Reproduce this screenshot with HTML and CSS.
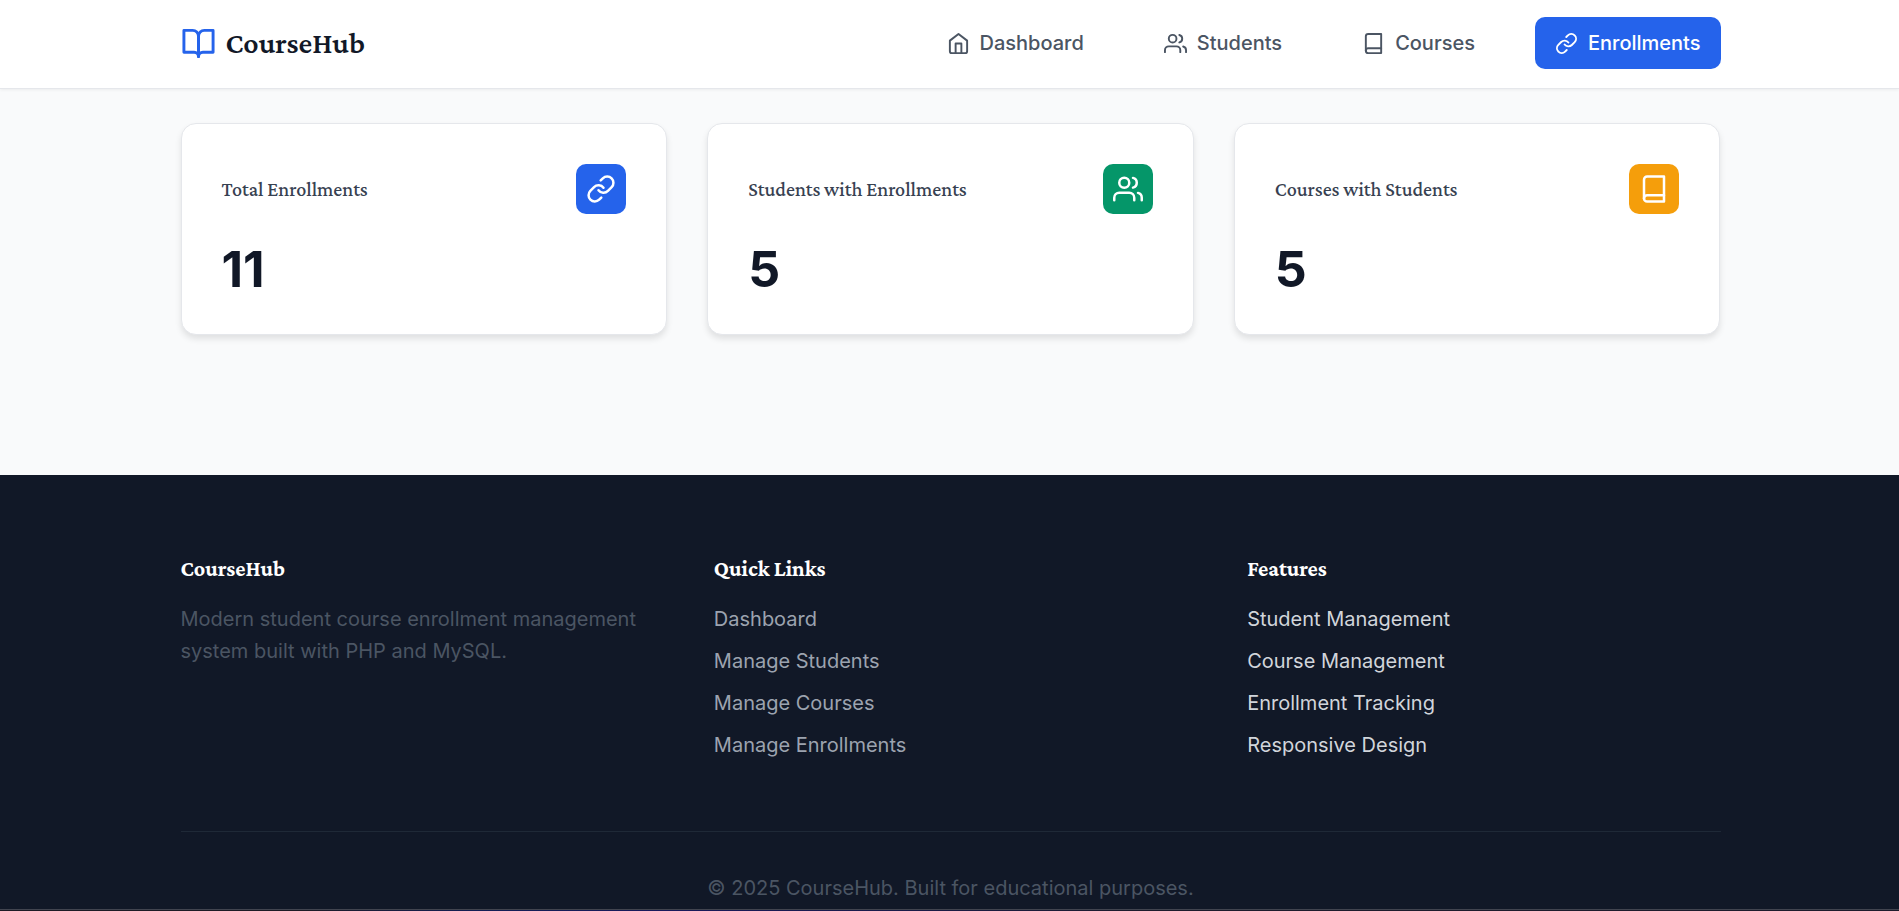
FILE: index.html
```html
<!DOCTYPE html>
<html lang="en">
<head>
<meta charset="utf-8">
<title>Enrollments - CourseHub</title>
<link rel="stylesheet" href="styles.css">
</head>
<body>
<svg class="sprite" aria-hidden="true">
  <symbol id="home" viewBox="0 0 24 24"><path d="M3 9l9-7 9 7v11a2 2 0 0 1-2 2H5a2 2 0 0 1-2-2z"/><path d="M9 22V12h6v10"/></symbol>
  <symbol id="users" viewBox="0 0 24 24"><path d="M17 21v-2a4 4 0 0 0-4-4H5a4 4 0 0 0-4 4v2"/><circle cx="9" cy="7" r="4"/><path d="M23 21v-2a4 4 0 0 0-3-3.87M16 3.13a4 4 0 0 1 0 7.75"/></symbol>
  <symbol id="book" viewBox="0 0 24 24"><path d="M4 19.5A2.5 2.5 0 0 1 6.5 17H20"/><path d="M6.5 2H20v20H6.5A2.5 2.5 0 0 1 4 19.5v-15A2.5 2.5 0 0 1 6.5 2z"/></symbol>
  <symbol id="link" viewBox="0 0 24 24"><path d="M10 13a5 5 0 0 0 7.54.54l3-3a5 5 0 0 0-7.07-7.07l-1.72 1.71"/><path d="M14 11a5 5 0 0 0-7.54-.54l-3 3a5 5 0 0 0 7.07 7.07l1.71-1.71"/></symbol>
  <symbol id="open-book" viewBox="0 0 24 24"><path d="M2 3h6a4 4 0 0 1 4 4v14a3 3 0 0 0-3-3H2z"/><path d="M22 3h-6a4 4 0 0 0-4 4v14a3 3 0 0 1 3-3h7z"/></symbol>
</svg>
<header class="header">
  <div class="container header-inner">
    <a class="brand" href="#"><svg class="icon brand-icon"><use href="#open-book"/></svg>CourseHub</a>
    <nav class="nav">
      <a class="nav-link" href="#"><svg class="icon"><use href="#home"/></svg>Dashboard</a>
      <a class="nav-link" href="#"><svg class="icon"><use href="#users"/></svg>Students</a>
      <a class="nav-link" href="#"><svg class="icon"><use href="#book"/></svg>Courses</a>
      <a class="nav-link active" href="#" aria-current="page"><svg class="icon"><use href="#link"/></svg>Enrollments</a>
    </nav>
  </div>
</header>
<main class="container stats">
  <section class="card">
    <div class="card-head"><h2 class="card-title">Total Enrollments</h2><span class="badge blue"><svg class="icon badge-icon"><use href="#link"/></svg></span></div>
    <p class="value">11</p>
  </section>
  <section class="card">
    <div class="card-head"><h2 class="card-title">Students with Enrollments</h2><span class="badge green"><svg class="icon badge-icon"><use href="#users"/></svg></span></div>
    <p class="value">5</p>
  </section>
  <section class="card">
    <div class="card-head"><h2 class="card-title">Courses with Students</h2><span class="badge amber"><svg class="icon badge-icon"><use href="#book"/></svg></span></div>
    <p class="value">5</p>
  </section>
</main>
<footer class="footer">
  <div class="container">
    <div class="footer-grid">
      <section><h3 class="footer-title">CourseHub</h3><p class="muted">Modern student course enrollment management system built with PHP and MySQL.</p></section>
      <section><h3 class="footer-title">Quick Links</h3>
        <ul class="list"><li><a href="#">Dashboard</a></li><li><a href="#">Manage Students</a></li><li><a href="#">Manage Courses</a></li><li><a href="#">Manage Enrollments</a></li></ul></section>
      <section><h3 class="footer-title">Features</h3>
        <ul class="list"><li>Student Management</li><li>Course Management</li><li>Enrollment Tracking</li><li>Responsive Design</li></ul></section>
    </div>
    <p class="copyright muted">© 2025 CourseHub. Built for educational purposes.</p>
  </div>
</footer>
<div class="edge"></div>
</body>
</html>
```
FILE: styles.css
```css
* { box-sizing: border-box; margin: 0; padding: 0; }
html { overflow: hidden; }
body { background: #f9fafb; color: #111827; font: 20px/32px Inter, sans-serif; }
a { color: inherit; text-decoration: none; }
.sprite { display: none; }
.icon { width: 23px; height: 23px; flex: none; fill: none; stroke: currentColor; stroke-width: 2; stroke-linecap: round; stroke-linejoin: round; }
.container { max-width: 1620px; margin: 0 auto; padding: 0 39px 0 41px; }
.header { background: #fff; border-bottom: 1px solid #e5e7eb; box-shadow: 0 1px 3px rgba(0, 0, 0, .06); }
.header-inner { display: flex; justify-content: space-between; align-items: center; padding-top: 17px; padding-bottom: 19px; }
.brand { display: flex; align-items: center; gap: 10px; font: 600 30px/40px "Crimson Pro", "Liberation Serif", serif; }
.brand-icon { width: 35px; height: 35px; color: #2563eb; }
.nav { display: flex; gap: 40px; }
.nav-link { display: flex; align-items: center; gap: 10px; padding: 10px 20px; border-radius: 10px; color: #4b5563; font-weight: 500; }
.nav-link.active { background: #2563eb; color: #fff; }
.stats { display: grid; grid-template-columns: repeat(3, 1fr); gap: 40px; padding-top: 34px; padding-bottom: 140px; }
.card { background: #fff; border: 1px solid #e5e7eb; border-radius: 15px; padding: 40px; box-shadow: 0 4px 6px rgba(0, 0, 0, .1); }
.card-head { display: flex; align-items: center; justify-content: space-between; margin-bottom: 30px; }
.card-title { font: 500 20px/26px "Crimson Pro", "Liberation Serif", serif; color: #374151; }
.badge { display: grid; place-items: center; width: 50px; height: 50px; border-radius: 10px; color: #fff; }
.badge-icon { width: 30px; height: 30px; }
.blue { background: #2563eb; }
.green { background: #059669; }
.amber { background: #f59e0b; }
.value { font-size: 50px; line-height: 50px; font-weight: 700; }
.footer { background: #111827; color: #d1d5db; padding: 80px 0 5px; }
.footer-grid { display: grid; grid-template-columns: repeat(3, 1fr); gap: 60px; margin-bottom: 70px; }
.footer-title { color: #fff; font: 700 22px/28px "Crimson Pro", "Liberation Serif", serif; margin-bottom: 20px; }
.list { list-style: none; display: grid; gap: 10px; }
.list a { color: #9ca3af; }
.muted { color: #4b5563; }
.copyright { border-top: 1px solid #1f2937; padding-top: 40px; text-align: center; }
.edge { height: 2px; border-top: 1px solid #41444f; background: linear-gradient(90deg, #1e1c26 0 16%, #141f55 25%, #191a5c 35%, #1a1c48 48%, #1e1c2c 60%); }
```
